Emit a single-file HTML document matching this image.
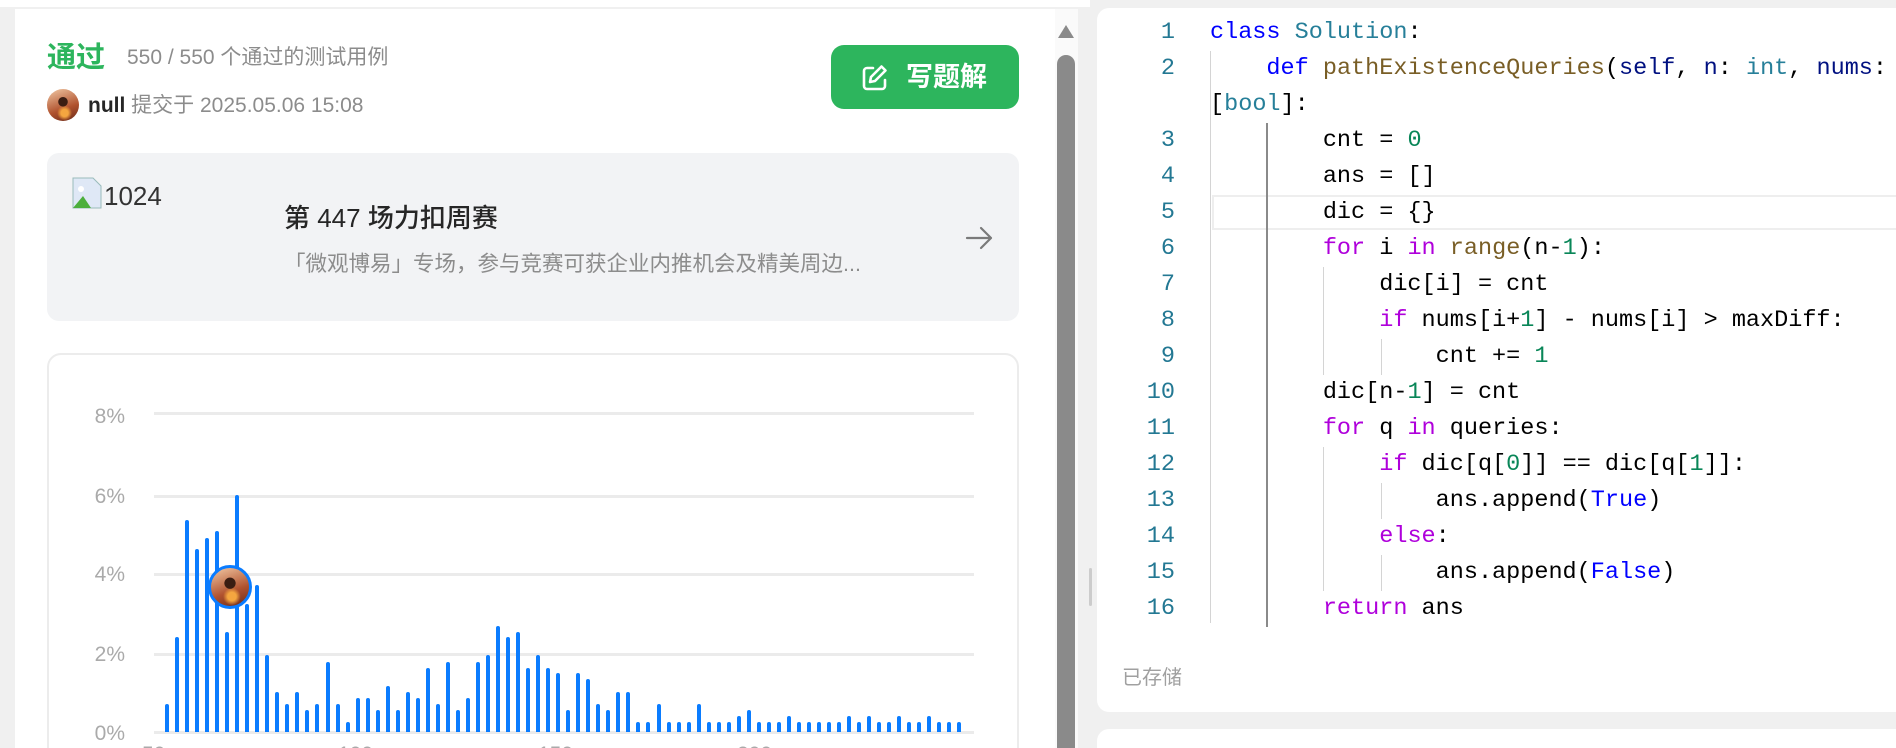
<!DOCTYPE html>
<html style="width:1896px;height:748px;overflow:hidden"><head><meta charset="utf-8">
<style>
*{margin:0;padding:0;box-sizing:border-box}
html,body{width:1896px;height:748px;overflow:hidden}
body{background:#f0f0f0;position:relative;font-family:"Liberation Sans","Noto Sans CJK SC",sans-serif}
#wrap{position:absolute;left:0;top:0;width:1896px;height:748px;overflow:hidden}
.a{position:absolute;white-space:nowrap}
.code{font-family:"Liberation Mono","Noto Sans CJK SC",monospace;font-size:23.5px;line-height:36px;color:#000}
.ln{position:absolute;left:1100px;width:75px;text-align:right;color:#237893}
.cl{position:absolute;left:1210px}
.k{color:#0000ff}.t{color:#267f99}.f{color:#795e26}.v{color:#001080}.n{color:#098658}.p{color:#af00db}
.g{position:absolute;width:1px;background:#d4d4d4}
.bar{position:absolute;width:4px;background:#0a7cff;border-radius:2px 2px 0 0}
.yl{position:absolute;left:80px;width:45px;text-align:right;font-size:21px;color:#aaa;line-height:24px}
.gl{position:absolute;left:154px;width:820px;height:3px;background:#ebebeb}
.av{border-radius:50%;background:radial-gradient(circle at 50% 40%,#3a1d12 0 18%,transparent 20%),radial-gradient(circle at 55% 75%,#f4a640 0 12%,transparent 25%),linear-gradient(160deg,#f2c9a5,#b0522e 60%,#6a2a18)}
#cw{position:absolute;left:0;top:2px;width:1896px;height:746px}
</style></head><body><div id="wrap">
<div class="a" style="left:0;top:0;width:1090px;height:7px;background:#fff"></div>
<div class="a" style="left:15px;top:9px;width:1040px;height:739px;background:#fff"></div>
<div class="a" style="left:1055px;top:9px;width:23px;height:739px;background:#fafafa"></div>
<div class="a" style="left:1058px;top:25px;width:0;height:0;border-left:8px solid transparent;border-right:8px solid transparent;border-bottom:13px solid #8a8a8a"></div>
<div class="a" style="left:1057px;top:55px;width:18px;height:700px;background:#8a8a8a;border-radius:9px 9px 0 0"></div>

<div class="a" style="left:47px;top:40px;font-size:29px;font-weight:bold;color:#2db55d;line-height:36px">通过</div>
<div class="a" style="left:127px;top:45px;font-size:21px;color:#8c8c8c;line-height:26px">550 / 550 个通过的测试用例</div>
<div class="a av" style="left:47px;top:89px;width:32px;height:32px"></div>
<div class="a" style="left:88px;top:93px;font-size:21px;color:#8c8c8c;line-height:26px"><b style="color:#262626">null</b> 提交于 2025.05.06 15:08</div>

<div class="a" style="left:831px;top:45px;width:188px;height:64px;background:#2db55d;border-radius:13px"></div>
<svg class="a" style="left:860px;top:63px" width="30" height="30" viewBox="0 0 30 30" fill="none" stroke="#fff" stroke-width="2.6" stroke-linecap="round" stroke-linejoin="round"><path d="M13 5H7a3 3 0 0 0-3 3v15a3 3 0 0 0 3 3h15a3 3 0 0 0 3-3v-6"/><path d="M21.5 3.5l4 4L15 18l-5 1 1-5z"/></svg>
<div class="a" style="left:906px;top:60px;font-size:27px;font-weight:bold;color:#fff;line-height:34px">写题解</div>

<div class="a" style="left:47px;top:153px;width:972px;height:168px;background:#f2f3f5;border-radius:12px"></div>
<svg class="a" style="left:71px;top:177px" width="32" height="32" viewBox="0 0 32 32"><path d="M2 1h20l8 8v22H2z" fill="#dfe8f6" stroke="#9bb" stroke-width="1"/><path d="M2 31l10-12 8 12z" fill="#4caf3c"/><circle cx="10" cy="12" r="3" fill="#fff"/></svg>
<div class="a" style="left:104px;top:181px;font-size:26px;color:#333;line-height:30px">1024</div>
<div class="a" style="left:284px;top:202px;font-size:26px;font-weight:500;color:#262626;line-height:32px">第 447 场力扣周赛</div>
<div class="a" style="left:284px;top:250px;font-size:21.5px;color:#8c8c8c;line-height:28px">「微观博易」专场，参与竞赛可获企业内推机会及精美周边...</div>
<svg class="a" style="left:964px;top:225px" width="30" height="26" viewBox="0 0 30 26" fill="none" stroke="#7a7a7a" stroke-width="2.2" stroke-linecap="round" stroke-linejoin="round"><path d="M3 13h24M17 3l10 10-10 10"/></svg>

<div class="a" style="left:47px;top:353px;width:972px;height:420px;background:#fff;border:2px solid #ececec;border-radius:14px"></div>
<div class="gl" style="top:412px"></div><div class="gl" style="top:495px"></div><div class="gl" style="top:573px"></div><div class="gl" style="top:653px"></div><div class="gl" style="top:731px"></div>
<div class="yl" style="top:405px">8%</div><div class="yl" style="top:485px">6%</div><div class="yl" style="top:563px">4%</div><div class="yl" style="top:643px">2%</div><div class="yl" style="top:722px">0%</div>
<div id="bars"></div>
<div class="a" style="left:142px;top:743px;font-size:21px;color:#aaa">50</div>
<div class="a" style="left:338px;top:743px;font-size:21px;color:#aaa">100</div>
<div class="a" style="left:538px;top:743px;font-size:21px;color:#aaa">150</div>
<div class="a" style="left:737px;top:743px;font-size:21px;color:#aaa">200</div>
<script>
var h=[0.71,2.37,5.32,4.58,4.87,5.03,2.51,5.93,3.2,3.68,1.92,1.0,0.71,1.0,0.56,0.71,1.76,0.71,0.25,0.85,0.85,0.56,1.16,0.56,1.0,0.85,1.61,0.71,1.76,0.56,0.85,1.76,1.92,2.66,2.37,2.51,1.61,1.92,1.61,1.47,0.56,1.47,1.32,0.71,0.56,1.0,1.0,0.25,0.25,0.71,0.25,0.25,0.25,0.71,0.25,0.25,0.25,0.4,0.56,0.25,0.25,0.25,0.4,0.25,0.25,0.25,0.25,0.25,0.4,0.25,0.4,0.25,0.25,0.4,0.25,0.25,0.4,0.25,0.25,0.25];
var s='';for(var i=0;i<h.length;i++){var ht=Math.round(h[i]*39.9);s+='<div class="bar" style="left:'+(165+i*10.03).toFixed(1)+'px;top:'+(732-ht)+'px;height:'+ht+'px"></div>';}
document.getElementById('bars').innerHTML=s;
</script>
<div class="a av" style="left:208px;top:565px;width:44px;height:44px;border:3px solid #0a7cff"></div>

<div class="a" style="left:1097px;top:8px;width:799px;height:704px;background:#fff;border-radius:12px 0 0 12px"></div>
<div class="a" style="left:1097px;top:729px;width:799px;height:19px;background:#fff;border-radius:12px 0 0 0"></div>
<div class="a" style="left:1089px;top:568px;width:3px;height:38px;background:#ccc;border-radius:2px"></div>

<div id="cw">
<div class="a" style="left:1212px;top:193px;width:684px;height:35px;border:2px solid #eeeeee;border-right:none"></div>
<div class="g" style="left:1210px;top:49px;height:572px"></div>
<div class="g" style="left:1266px;top:121px;height:504px;background:#8a8a8a;width:2px"></div>
<div class="g" style="left:1323px;top:265px;height:108px"></div>
<div class="g" style="left:1323px;top:445px;height:144px"></div>
<div class="g" style="left:1381px;top:337px;height:36px"></div>
<div class="g" style="left:1381px;top:481px;height:36px"></div>
<div class="g" style="left:1381px;top:553px;height:36px"></div>

<div class="code">
<div class="ln" style="top:13px">1</div><div class="ln" style="top:49px">2</div>
<div class="ln" style="top:121px">3</div><div class="ln" style="top:157px">4</div><div class="ln" style="top:193px">5</div><div class="ln" style="top:229px">6</div><div class="ln" style="top:265px">7</div><div class="ln" style="top:301px">8</div><div class="ln" style="top:337px">9</div><div class="ln" style="top:373px">10</div><div class="ln" style="top:409px">11</div><div class="ln" style="top:445px">12</div><div class="ln" style="top:481px">13</div><div class="ln" style="top:517px">14</div><div class="ln" style="top:553px">15</div><div class="ln" style="top:589px">16</div>
<pre class="cl code" style="top:13px"><span class="k">class</span> <span class="t">Solution</span>:</pre>
<pre class="cl code" style="top:49px">    <span class="k">def</span> <span class="f">pathExistenceQueries</span>(<span class="v">self</span>, <span class="v">n</span>: <span class="t">int</span>, <span class="v">nums</span>:</pre>
<pre class="cl code" style="top:85px">[<span class="t">bool</span>]:</pre>
<pre class="cl code" style="top:121px">        cnt = <span class="n">0</span></pre>
<pre class="cl code" style="top:157px">        ans = []</pre>
<pre class="cl code" style="top:193px">        dic = {}</pre>
<pre class="cl code" style="top:229px">        <span class="p">for</span> i <span class="p">in</span> <span class="f">range</span>(n-<span class="n">1</span>):</pre>
<pre class="cl code" style="top:265px">            dic[i] = cnt</pre>
<pre class="cl code" style="top:301px">            <span class="p">if</span> nums[i+<span class="n">1</span>] - nums[i] &gt; maxDiff:</pre>
<pre class="cl code" style="top:337px">                cnt += <span class="n">1</span></pre>
<pre class="cl code" style="top:373px">        dic[n-<span class="n">1</span>] = cnt</pre>
<pre class="cl code" style="top:409px">        <span class="p">for</span> q <span class="p">in</span> queries:</pre>
<pre class="cl code" style="top:445px">            <span class="p">if</span> dic[q[<span class="n">0</span>]] == dic[q[<span class="n">1</span>]]:</pre>
<pre class="cl code" style="top:481px">                ans.append(<span class="k">True</span>)</pre>
<pre class="cl code" style="top:517px">            <span class="p">else</span>:</pre>
<pre class="cl code" style="top:553px">                ans.append(<span class="k">False</span>)</pre>
<pre class="cl code" style="top:589px">        <span class="p">return</span> ans</pre>
</div>
</div>
<div class="a" style="left:1122px;top:665px;font-size:20px;color:#a0a0a0;line-height:26px">已存储</div>
</div></body></html>
